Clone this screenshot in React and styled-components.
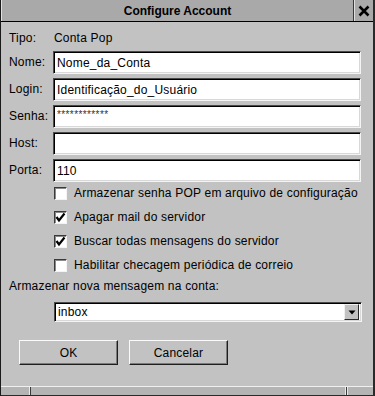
import React from "react";
import styled, { createGlobalStyle } from "styled-components";

const GlobalStyle = createGlobalStyle`
  html, body {
    margin: 0;
    padding: 0;
    background: #c2c2c2;
  }
  body {
    font-family: "Liberation Sans", Arial, sans-serif;
    font-size: 12px;
    letter-spacing: 0.2px;
    color: #000;
  }
`;

const fields = [
  { label: "Nome:", value: "Nome_da_Conta" },
  { label: "Login:", value: "Identificação_do_Usuário" },
  { label: "Senha:", value: "************", secret: true },
  { label: "Host:", value: "" },
  { label: "Porta:", value: "110" },
];

const options = [
  { label: "Armazenar senha POP em arquivo de configuração", checked: false },
  { label: "Apagar mail do servidor", checked: true },
  { label: "Buscar todas mensagens do servidor", checked: true },
  { label: "Habilitar checagem periódica de correio", checked: false },
];

function App() {
  return (
    <>
      <GlobalStyle />
      <Window>
        <TitleBar>
          <Title>Configure Account</Title>
          <CloseButton>
            <svg width="12" height="12" viewBox="0 0 12 12">
              <path d="M1.5 1.5 L10.5 10.5 M10.5 1.5 L1.5 10.5" stroke="#000" strokeWidth="2.6" />
            </svg>
          </CloseButton>
        </TitleBar>

        <Body>
          <FieldGrid>
            <Label>Tipo:</Label>
            <Plain>Conta Pop</Plain>
            {fields.map((f) => (
              <React.Fragment key={f.label}>
                <Label>{f.label}</Label>
                <TextInput $secret={f.secret} readOnly value={f.value} />
              </React.Fragment>
            ))}
          </FieldGrid>

          <CheckList>
            {options.map((o) => (
              <CheckRow key={o.label}>
                <CheckBox>
                  {o.checked && (
                    <svg width="11" height="11" viewBox="0 0 11 11">
                      <path d="M1.5 5 L4 8.5 L9.5 1.5" stroke="#000" strokeWidth="2.2" fill="none" />
                    </svg>
                  )}
                </CheckBox>
                <span>{o.label}</span>
              </CheckRow>
            ))}
          </CheckList>

          <SectionLabel>Armazenar nova mensagem na conta:</SectionLabel>
          <Select>
            <span>inbox</span>
            <ArrowButton>
              <svg width="8" height="7" viewBox="0 0 8 7">
                <path d="M0.5 1.5 L7.5 1.5 L4 5.5 Z" fill="#000" />
              </svg>
            </ArrowButton>
          </Select>

          <ButtonRow>
            <Button>OK</Button>
            <Button>Cancelar</Button>
          </ButtonRow>
        </Body>

        <BottomFrame>
          <FrameSegment $w="29px" />
          <FrameSegment $w="315px" />
          <FrameSegment />
        </BottomFrame>
      </Window>
    </>
  );
}

const Window = styled.div`
  width: 375px;
  height: 396px;
  box-sizing: border-box;
  display: flex;
  flex-direction: column;
  background: #c2c2c2;
  border-left: 1px solid #1a1a1a;
  border-right: 2px solid #2a2a2a;
  overflow: hidden;
`;

const TitleBar = styled.div`
  height: 21px;
  display: flex;
  background: #a9a9a9;
  border-top: 1px solid #e6e6e6;
  border-bottom: 1px solid #000;
  box-sizing: content-box;
  margin-top: -1px;
`;

const Title = styled.div`
  flex: 1;
  display: flex;
  align-items: center;
  justify-content: center;
  font-weight: bold;
  font-size: 12px;
  letter-spacing: 0;
  border-left: 1px solid #e0e0e0;
`;

const CloseButton = styled.div`
  width: 19px;
  display: flex;
  align-items: center;
  justify-content: center;
  border-left: 1px solid #3a3a3a;
  box-shadow: inset 1px 0 0 #e0e0e0;
  background: #a9a9a9;
`;

const Body = styled.div`
  flex: 1;
  padding: 8px 0 0 8px;
  display: flex;
  flex-direction: column;
`;

const FieldGrid = styled.div`
  display: grid;
  grid-template-columns: 44px 308px;
  row-gap: 4px;
  align-items: center;
`;

const Label = styled.div`
  line-height: 17px;
`;

const Plain = styled.div`
  line-height: 17px;
  padding-left: 1px;
`;

const TextInput = styled.input`
  box-sizing: border-box;
  width: 308px;
  height: 23px;
  margin: 0;
  padding: ${(p) => (p.$secret ? "0 3px 4px" : "0 3px")};
  font-family: "Liberation Sans", Arial, sans-serif;
  font-size: ${(p) => (p.$secret ? "10px" : "12px")};
  letter-spacing: ${(p) => (p.$secret ? "0.4px" : "0.2px")};
  color: ${(p) => (p.$secret ? "#333" : "#000")};
  background: #fff;
  border: 1px solid;
  border-color: #4a4a4a #f4f4f4 #f4f4f4 #4a4a4a;
  box-shadow: inset 1px 1px 0 #000, inset -1px -1px 0 #d8d8d8;
  outline: none;
  border-radius: 0;
`;

const CheckList = styled.div`
  display: flex;
  flex-direction: column;
  margin-top: -1px;
  padding-left: 45px;
`;

const CheckRow = styled.div`
  height: 24px;
  display: flex;
  align-items: center;
  gap: 7px;
`;

const CheckBox = styled.div`
  width: 13px;
  height: 13px;
  box-sizing: border-box;
  background: #fff;
  border: 1px solid;
  border-color: #3a3a3a #f4f4f4 #f4f4f4 #3a3a3a;
  box-shadow: inset 1px 1px 0 #8a8a8a;
  display: flex;
  align-items: center;
  justify-content: center;
`;

const SectionLabel = styled.div`
  margin-top: 2px;
  line-height: 14px;
`;

const Select = styled.div`
  margin: 9px 0 0 45px;
  width: 308px;
  height: 20px;
  box-sizing: border-box;
  display: flex;
  align-items: center;
  justify-content: space-between;
  padding: 0 2px 0 3px;
  background: #fff;
  border: 1px solid;
  border-color: #4a4a4a #f4f4f4 #f4f4f4 #4a4a4a;
  box-shadow: inset 1px 1px 0 #000, inset -1px -1px 0 #d8d8d8;
`;

const ArrowButton = styled.div`
  width: 15px;
  height: 16px;
  box-sizing: border-box;
  background: #c2c2c2;
  border: 1px solid;
  border-color: #f0f0f0 #2a2a2a #2a2a2a #f0f0f0;
  display: flex;
  align-items: center;
  justify-content: center;
`;

const ButtonRow = styled.div`
  display: flex;
  gap: 11px;
  margin: 18px 0 0 10px;
`;

const Button = styled.div`
  width: 99px;
  height: 25px;
  box-sizing: border-box;
  display: flex;
  align-items: center;
  justify-content: center;
  background: #c2c2c2;
  border: 1px solid;
  border-color: #fafafa #1e1e1e #1e1e1e #fafafa;
  box-shadow: inset -1px -1px 0 #7a7a7a;
  font-size: 12px;
`;

const BottomFrame = styled.div`
  height: 8px;
  display: flex;
  border-top: 1px solid #f0f0f0;
  border-bottom: 1px solid #2a2a2a;
  background: #b4b4b4;
`;

const FrameSegment = styled.div`
  width: ${(p) => p.$w || "auto"};
  flex: ${(p) => (p.$w ? "none" : "1")};
  border-right: 1px solid #3a3a3a;
  box-shadow: inset -1px 0 0 #e8e8e8;
  &:last-child {
    border-right: none;
    box-shadow: inset 1px 0 0 #e8e8e8;
  }
`;

export default App;
